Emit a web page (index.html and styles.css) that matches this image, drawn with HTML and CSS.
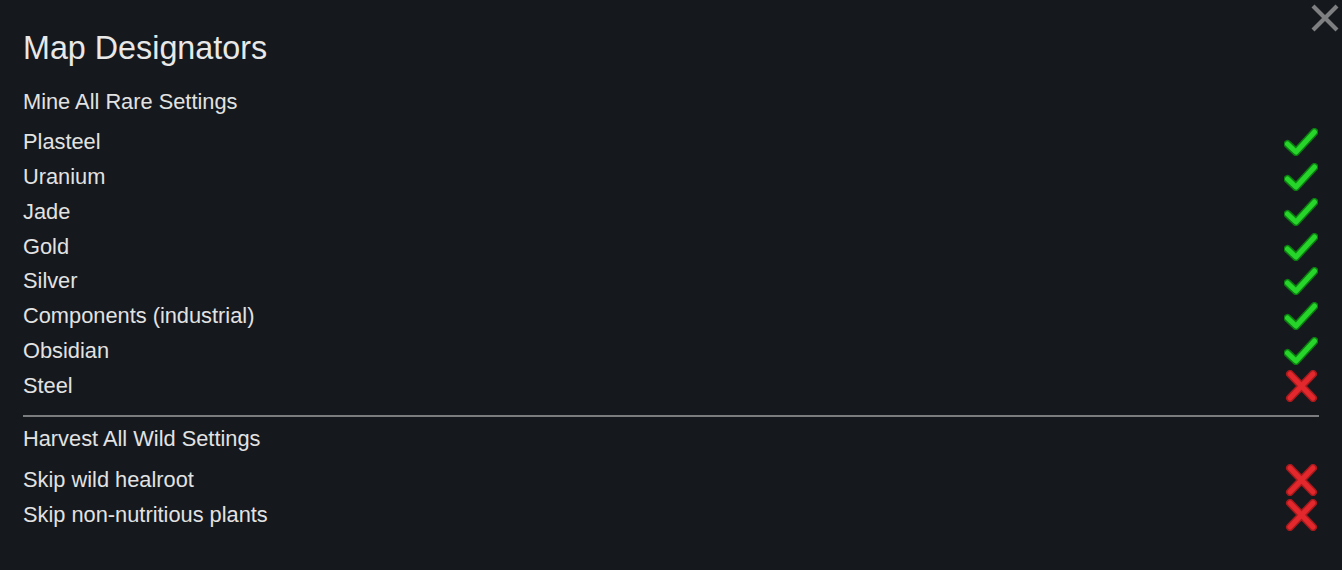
FILE: index.html
```html
<!DOCTYPE html>
<html lang="en">
<head>
<meta charset="utf-8">
<title>Map Designators</title>
<link rel="stylesheet" href="styles.css">
</head>
<body>
<svg class="defs" width="0" height="0" aria-hidden="true">
  <defs>
    <symbol id="check" viewBox="0 0 34 28">
      <path d="M3.5 16 L12 24 L30.5 4" stroke="#0b7d10" stroke-width="8" stroke-linecap="round" stroke-linejoin="round" fill="none"/>
      <path d="M3.5 16 L12 24 L30.5 4" stroke="#27d42a" stroke-width="5" stroke-linecap="round" stroke-linejoin="round" fill="none"/>
    </symbol>
    <symbol id="cross" viewBox="0 0 34 32">
      <path d="M6 4 L29 28 M29 4 L6 28" stroke="#a51a1d" stroke-width="8" stroke-linecap="round" fill="none"/>
      <path d="M6 4 L29 28 M29 4 L6 28" stroke="#e2282c" stroke-width="5" stroke-linecap="round" fill="none"/>
    </symbol>
  </defs>
</svg>
<div class="dialog">
  <button class="close" aria-label="Close">
    <svg width="28" height="28" viewBox="0 0 28 28"><path d="M2 2 L26 26 M26 2 L2 26" stroke="#7e7f80" stroke-width="4.2" fill="none"/></svg>
  </button>
  <h1 class="title">Map Designators</h1>
  <section class="group">
    <div class="group-head">Mine All Rare Settings</div>
    <div class="row"><span>Plasteel</span><svg class="icon" width="34" height="28"><use href="#check"/></svg></div>
    <div class="row"><span>Uranium</span><svg class="icon" width="34" height="28"><use href="#check"/></svg></div>
    <div class="row"><span>Jade</span><svg class="icon" width="34" height="28"><use href="#check"/></svg></div>
    <div class="row"><span>Gold</span><svg class="icon" width="34" height="28"><use href="#check"/></svg></div>
    <div class="row"><span>Silver</span><svg class="icon" width="34" height="28"><use href="#check"/></svg></div>
    <div class="row"><span>Components (industrial)</span><svg class="icon" width="34" height="28"><use href="#check"/></svg></div>
    <div class="row"><span>Obsidian</span><svg class="icon" width="34" height="28"><use href="#check"/></svg></div>
    <div class="row"><span>Steel</span><svg class="icon" width="34" height="32"><use href="#cross"/></svg></div>
  </section>
  <hr class="divider">
  <section class="group">
    <div class="group-head">Harvest All Wild Settings</div>
    <div class="row"><span>Skip wild healroot</span><svg class="icon" width="34" height="32"><use href="#cross"/></svg></div>
    <div class="row"><span>Skip non-nutritious plants</span><svg class="icon" width="34" height="32"><use href="#cross"/></svg></div>
  </section>
</div>
</body>
</html>
```

FILE: styles.css
```css
html, body {
  margin: 0;
  padding: 0;
  background: #15181d;
  height: 100%;
}
body {
  font-family: "Liberation Sans", Arial, sans-serif;
  color: #e2e2e2;
}
.defs {
  position: absolute;
  width: 0;
  height: 0;
}
.dialog {
  position: relative;
  padding: 28px 23px 0 23px;
}
.close {
  position: absolute;
  top: 4px;
  right: 3px;
  background: none;
  border: 0;
  padding: 0;
  width: 28px;
  height: 28px;
  line-height: 0;
}
.title {
  margin: 0;
  font-weight: normal;
  font-size: 32.3px;
  line-height: 40px;
  height: 40px;
  color: #e8e8e8;
}
.group {
  display: flex;
  flex-direction: column;
}
.group-head {
  font-size: 21.8px;
  line-height: 35px;
  height: 35px;
  margin-bottom: 6px;
}
.title + .group {
  margin-top: 15.5px;
}
.row {
  display: flex;
  align-items: center;
  justify-content: space-between;
  height: 34.86px;
  font-size: 21.8px;
}
.icon {
  flex: none;
  margin-right: 1px;
}
.divider {
  border: 0;
  height: 2px;
  background: #7b7c7e;
  margin: 11.5px 0 4.5px 0;
}
```
